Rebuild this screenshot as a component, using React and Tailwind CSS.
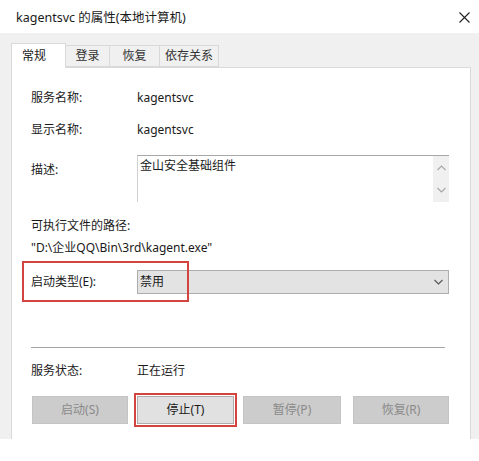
import React from "react";

const FONT = { fontFamily: '"Noto Sans", "Noto Sans CJK SC", sans-serif' };

function Chevron({ up = false, className = "" }) {
  return (
    <svg width="9" height="6" viewBox="0 0 9 6" className={className}>
      <polyline
        points={up ? "0.5,5 4.5,1 8.5,5" : "0.5,1 4.5,5 8.5,1"}
        fill="none"
        stroke="currentColor"
        strokeWidth="1.1"
      />
    </svg>
  );
}

function Row({ label, children, className = "" }) {
  return (
    <div className={`flex h-[20px] items-center ${className}`}>
      <span className="w-[106px] shrink-0">{label}</span>
      {children}
    </div>
  );
}

export default function App() {
  const tabs = [
    { name: "登录", w: "w-[44px]" },
    { name: "恢复", w: "w-[50px]" },
    { name: "依存关系", w: "w-[59px]" },
  ];

  return (
    <div className="h-[461px] w-[479px] bg-white text-[12px] leading-none text-[#1a1a1a]" style={FONT}>
      {/* title bar */}
      <div className="flex h-[33px] items-center justify-between pl-[16px] pr-[9px]">
        <span className="pt-[4px] text-[12.5px]">kagentsvc 的属性(本地计算机)</span>
        <svg width="11" height="11" viewBox="0 0 11 11" className="mt-[1px]">
          <path d="M0.5 0.5 L10.5 10.5 M10.5 0.5 L0.5 10.5" stroke="#222" strokeWidth="1.1" />
        </svg>
      </div>

      {/* body */}
      <div className="flex h-[406px] flex-col bg-[#f0f0f0] pl-[11px] pr-[8px] pt-[9px]">
        {/* tabs */}
        <div className="relative z-10 flex h-[25px] items-end">
          <div className="-mb-px flex h-[25px] w-[55px] items-center border border-b-0 border-[#d9d9d9] bg-white pl-[10px]">
            常规
          </div>
          {tabs.map((t) => (
            <div
              key={t.name}
              className={`flex h-[22px] ${t.w} items-center justify-center border border-l-0 border-[#d9d9d9] bg-[#f0f0f0] text-[#333]`}
            >
              {t.name}
            </div>
          ))}
        </div>

        {/* panel */}
        <div className="flex-1 border border-b-0 border-[#d9d9d9] bg-white pl-[19px]">
          <Row label="服务名称:" className="mt-[20px]">
            <span>kagentsvc</span>
          </Row>
          <Row label="显示名称:" className="mt-[12px]">
            <span>kagentsvc</span>
          </Row>

          <div className="mt-[15px] flex h-[47px]">
            <span className="mt-[9px] w-[106px] shrink-0">描述:</span>
            <div className="flex w-[312px] border-l border-t border-[#a8a8a8] border-l-[#d0d0d0]">
              <div className="flex-1 pl-[2px] pt-[4px]">金山安全基础组件</div>
              <div className="flex w-[16px] flex-col items-center justify-between bg-[#f0f0f0] py-[9px] text-[#a6a6a6]">
                <Chevron up />
                <Chevron />
              </div>
            </div>
          </div>

          <div className="mt-[14px] flex h-[20px] items-center">可执行文件的路径:</div>
          <div className="mt-[2px] flex h-[20px] items-center">"D:\企业QQ\Bin\3rd\kagent.exe"</div>

          <div className="relative mt-[3px] flex h-[41px] items-center">
            <div className="pointer-events-none absolute left-[-9px] top-0 h-[41px] w-[167px] border-2 border-[#d1443f]" />
            <span className="w-[106px] shrink-0">启动类型(E):</span>
            <div className="flex h-[24px] w-[312px] items-center justify-between border border-[#adadad] bg-[#e3e3e3] pl-[2px] pr-[5px]">
              <span>禁用</span>
              <Chevron className="text-[#555]" />
            </div>
          </div>

          <div className="mt-[45px] h-px w-[414px] bg-[#a5a5a5]" />

          <Row label="服务状态:" className="mt-[13px]">
            <span>正在运行</span>
          </Row>

          <div className="mt-[15px] flex h-[28px] items-center">
            <div className="ml-[1px] flex h-[28px] w-[96px] items-center justify-center border border-[#c4c4c4] bg-[#cccccc] text-[#8a8a8a]">
              启动(S)
            </div>
            <div className="relative ml-[9px]">
              <div className="pointer-events-none absolute -inset-[3px] border-2 border-[#d1443f]" />
              <div className="flex h-[28px] w-[97px] items-center justify-center border border-[#adadad] bg-[#e1e1e1]">
                停止(T)
              </div>
            </div>
            <div className="ml-[9px] flex h-[28px] w-[98px] items-center justify-center border border-[#c4c4c4] bg-[#cccccc] text-[#8a8a8a]">
              暂停(P)
            </div>
            <div className="ml-[12px] flex h-[28px] w-[96px] items-center justify-center border border-[#c4c4c4] bg-[#cccccc] text-[#8a8a8a]">
              恢复(R)
            </div>
          </div>
        </div>
      </div>
    </div>
  );
}
